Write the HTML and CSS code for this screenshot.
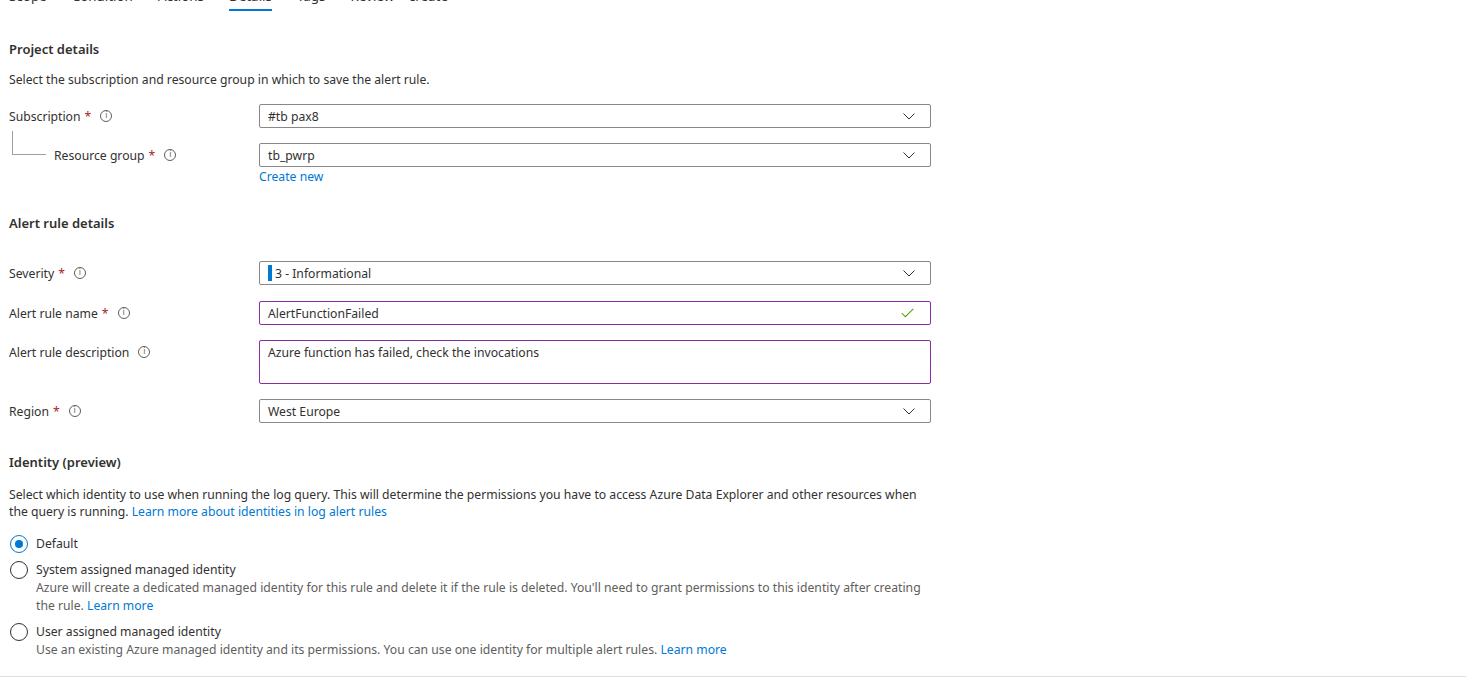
FILE: index.html
```html
<!DOCTYPE html>
<html>
<head>
<meta charset="utf-8">
<link rel="stylesheet" href="styles.css">
</head>
<body>
<div class="page">
  <nav class="tabs">
    <span class="tab">Scope</span>
    <span class="tab">Condition</span>
    <span class="tab">Actions</span>
    <span class="tab active">Details</span>
    <span class="tab">Tags</span>
    <span class="tab">Review + create</span>
  </nav>

  <div class="content">
    <h2 class="section-title first">Project details</h2>
    <p class="intro">Select the subscription and resource group in which to save the alert rule.</p>

    <div class="row">
      <div class="label">Subscription<span class="req">*</span><span class="info">i</span></div>
      <div class="field select"><span class="value">#tb pax8</span><svg class="chev" viewBox="0 0 12 7"><path d="M0.5 0.5 L6 6 L11.5 0.5" fill="none" stroke="#323130" stroke-width="1"/></svg></div>
    </div>
    <div class="row sub">
      <div class="label nested"><span class="tree"></span>Resource group<span class="req">*</span><span class="info">i</span></div>
      <div class="field-wrap">
        <div class="field select"><span class="value">tb_pwrp</span><svg class="chev" viewBox="0 0 12 7"><path d="M0.5 0.5 L6 6 L11.5 0.5" fill="none" stroke="#323130" stroke-width="1"/></svg></div>
        <a class="link create">Create new</a>
      </div>
    </div>

    <h2 class="section-title second">Alert rule details</h2>

    <div class="row sev">
      <div class="label">Severity<span class="req">*</span><span class="info">i</span></div>
      <div class="field select"><span class="sevbar"></span><span class="value">3 - Informational</span><svg class="chev" viewBox="0 0 12 7"><path d="M0.5 0.5 L6 6 L11.5 0.5" fill="none" stroke="#323130" stroke-width="1"/></svg></div>
    </div>
    <div class="row">
      <div class="label">Alert rule name<span class="req">*</span><span class="info">i</span></div>
      <div class="field focus"><span class="value">AlertFunctionFailed</span><svg class="check" viewBox="0 0 14 10"><path d="M0.7 5 L4.7 9 L13.3 0.6" fill="none" stroke="#57a300" stroke-width="1.1"/></svg></div>
    </div>
    <div class="row">
      <div class="label">Alert rule description<span class="info nr">i</span></div>
      <div class="field focus area"><span class="value">Azure function has failed, check the invocations</span></div>
    </div>
    <div class="row">
      <div class="label">Region<span class="req">*</span><span class="info">i</span></div>
      <div class="field select"><span class="value">West Europe</span><svg class="chev" viewBox="0 0 12 7"><path d="M0.5 0.5 L6 6 L11.5 0.5" fill="none" stroke="#323130" stroke-width="1"/></svg></div>
    </div>

    <h2 class="section-title third">Identity (preview)</h2>
    <p class="para">Select which identity to use when running the log query. This will determine the permissions you have to access Azure Data Explorer and other resources when the query is running. <a class="link">Learn more about identities in log alert rules</a></p>

    <div class="radios">
      <div class="radio checked">
        <span class="circle"><span class="dot"></span></span>
        <div class="rtext"><div class="rlabel">Default</div></div>
      </div>
      <div class="radio">
        <span class="circle"></span>
        <div class="rtext">
          <div class="rlabel">System assigned managed identity</div>
          <div class="rdesc">Azure will create a dedicated managed identity for this rule and delete it if the rule is deleted. You'll need to grant permissions to this identity after creating the rule. <a class="link">Learn more</a></div>
        </div>
      </div>
      <div class="radio">
        <span class="circle"></span>
        <div class="rtext">
          <div class="rlabel">User assigned managed identity</div>
          <div class="rdesc">Use an existing Azure managed identity and its permissions. You can use one identity for multiple alert rules. <a class="link">Learn more</a></div>
        </div>
      </div>
    </div>
  </div>
</div>
<div class="footer-line"></div>
</body>
</html>
```

FILE: styles.css
```css
html, body {
  margin: 0;
  padding: 0;
  background: #ffffff;
}
body {
  font-family: "Noto Sans", "Open Sans", sans-serif;
  font-size: 12.2px;
  color: #323130;
  height: 680px;
  overflow: hidden;
  position: relative;
}
.page {
  padding-left: 9px;
}
.tabs {
  display: flex;
  gap: 25px;
  margin-top: -13px;
  height: 26px;
}
.tab {
  display: block;
  font-size: 13.4px;
  line-height: 18px;
  height: 22px;
  color: #323130;
}
.tab.active {
  border-bottom: 2px solid #0078d4;
}
.content {
  width: 922px;
}
.section-title {
  font-size: 13px;
  font-weight: 600;
  margin: 0;
  line-height: 20px;
}
.section-title.first { margin-top: 26px; }
.section-title.second { margin-top: 27px; margin-bottom: 28px; }
.section-title.third { margin-top: 29px; }
.intro {
  margin: 12px 0 15px;
  line-height: 18px;
}
.row {
  display: flex;
  align-items: flex-start;
  margin-bottom: 15px;
}
.row.sub { margin-bottom: 0; }
.row.sev { margin-bottom: 16px; }
.label {
  width: 250px;
  flex: none;
  display: flex;
  align-items: center;
  height: 24px;
  position: relative;
}
.label.nested {
  padding-left: 45px;
  width: 205px;
}
.tree {
  position: absolute;
  left: 3px;
  top: -12px;
  width: 33px;
  height: 23px;
  border-left: 1px solid #a19f9d;
  border-bottom: 1px solid #a19f9d;
}
.req {
  color: #a4262c;
  margin-left: 4px;
}
.info {
  width: 10px;
  height: 10px;
  border: 1px solid #605e5c;
  border-radius: 50%;
  margin-left: 9px;
  font-size: 8px;
  line-height: 10px;
  text-align: center;
  color: #605e5c;
  font-family: "DejaVu Sans", sans-serif;
}
.info.nr { margin-left: 9px; }
.field-wrap {
  width: 672px;
}
.field {
  width: 672px;
  height: 24px;
  box-sizing: border-box;
  border: 1px solid #8a8886;
  border-radius: 2px;
  display: flex;
  align-items: center;
  padding: 0 15px 0 8px;
  position: relative;
}
.field .value {
  flex: 1;
  line-height: 18px;
  padding-top: 2px;
}
.field.focus {
  border-color: #8a2da5;
}
.field.area {
  height: 44px;
  align-items: flex-start;
  padding-top: 1px;
}
.chev {
  width: 12px;
  height: 7px;
  flex: none;
}
.check {
  width: 13px;
  height: 10px;
  flex: none;
  margin-right: 1px;
}
.sevbar {
  width: 4px;
  height: 16px;
  background: #0078d4;
  margin-right: 3px;
  flex: none;
}
.link {
  color: #0078d4;
  text-decoration: none;
}
.create {
  display: block;
  line-height: 18px;
  margin-top: 1px;
}
.para {
  margin: 14px 0 15px;
  line-height: 17px;
}
.radios {
  display: flex;
  flex-direction: column;
  gap: 8px;
}
.radio {
  display: flex;
  align-items: flex-start;
}
.circle {
  width: 18px;
  height: 18px;
  box-sizing: border-box;
  border: 1px solid #323130;
  border-radius: 50%;
  flex: none;
  margin-top: 0;
  margin-left: 1px;
  margin-right: 8px;
  display: flex;
  align-items: center;
  justify-content: center;
}
.radio.checked .circle {
  border-color: #0078d4;
}
.dot {
  width: 8px;
  height: 8px;
  border-radius: 50%;
  background: #0078d4;
}
.rlabel {
  line-height: 18px;
}
.rdesc {
  color: #605e5c;
  line-height: 18px;
}
.footer-line {
  position: absolute;
  left: 0;
  right: 0;
  top: 676px;
  height: 1px;
  background: #e1dfdd;
}
```
